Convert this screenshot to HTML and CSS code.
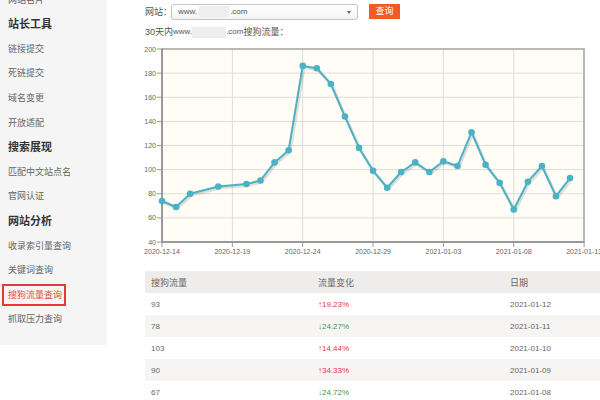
FILE: index.html
```html
<!DOCTYPE html>
<html lang="zh-CN">
<head>
<meta charset="utf-8">
<title>搜狗流量查询</title>
<link rel="stylesheet" href="styles.css">
</head>
<body>
<div class="page">
  <aside class="sidebar">
    <ul class="menu">
      <li class="item">网站名片</li>
      <li class="group">站长工具</li>
      <li class="item">链接提交</li>
      <li class="item">死链提交</li>
      <li class="item">域名变更</li>
      <li class="item">开放适配</li>
      <li class="group">搜索展现</li>
      <li class="item">匹配中文站点名</li>
      <li class="item">官网认证</li>
      <li class="group">网站分析</li>
      <li class="item">收录索引量查询</li>
      <li class="item">关键词查询</li>
      <li class="item"><span class="active">搜狗流量查询</span></li>
      <li class="item">抓取压力查询</li>
    </ul>
  </aside>
  <main class="main">
    <div class="query">
      <span class="label">网站：</span>
      <div class="select"><span class="en">www.</span><span class="mask"></span><span class="en">.com</span><span class="caret"></span></div>
      <button class="btn">查询</button>
    </div>
    <div class="title">30天内<span class="en">www.</span><span class="mask mask-title"></span><span class="en">.com</span>搜狗流量：</div>
    <svg class="chart" width="493" height="225" viewBox="107 41 493 225" xmlns="http://www.w3.org/2000/svg">
      <rect x="162" y="49" width="422" height="193" fill="#fffdf6"/>
      <g class="grid">
        <line x1="162" y1="73.1" x2="584" y2="73.1"/>
        <line x1="162" y1="97.25" x2="584" y2="97.25"/>
        <line x1="162" y1="121.4" x2="584" y2="121.4"/>
        <line x1="162" y1="145.5" x2="584" y2="145.5"/>
        <line x1="162" y1="169.6" x2="584" y2="169.6"/>
        <line x1="162" y1="193.75" x2="584" y2="193.75"/>
        <line x1="162" y1="217.9" x2="584" y2="217.9"/>
        <line x1="232.35" y1="49" x2="232.35" y2="242"/>
        <line x1="302.7" y1="49" x2="302.7" y2="242"/>
        <line x1="373.05" y1="49" x2="373.05" y2="242"/>
        <line x1="443.4" y1="49" x2="443.4" y2="242"/>
        <line x1="513.75" y1="49" x2="513.75" y2="242"/>
      </g>
      <rect class="frame" x="162" y="49" width="422" height="193"/>
      <g class="axis">
        <line x1="162" y1="48.5" x2="162" y2="242.5"/>
        <line x1="161.5" y1="242" x2="584.5" y2="242"/>
      </g>
      <g class="ticks">
        <line x1="157" y1="49" x2="161" y2="49"/>
        <line x1="157" y1="73.1" x2="161" y2="73.1"/>
        <line x1="157" y1="97.25" x2="161" y2="97.25"/>
        <line x1="157" y1="121.4" x2="161" y2="121.4"/>
        <line x1="157" y1="145.5" x2="161" y2="145.5"/>
        <line x1="157" y1="169.6" x2="161" y2="169.6"/>
        <line x1="157" y1="193.75" x2="161" y2="193.75"/>
        <line x1="157" y1="217.9" x2="161" y2="217.9"/>
        <line x1="157" y1="242" x2="161" y2="242"/>
        <line x1="162" y1="243" x2="162" y2="247"/>
        <line x1="232.35" y1="243" x2="232.35" y2="247"/>
        <line x1="302.7" y1="243" x2="302.7" y2="247"/>
        <line x1="373.05" y1="243" x2="373.05" y2="247"/>
        <line x1="443.4" y1="243" x2="443.4" y2="247"/>
        <line x1="513.75" y1="243" x2="513.75" y2="247"/>
        <line x1="584.1" y1="243" x2="584.1" y2="247"/>
      </g>
      <g class="ylab">
        <text x="156" y="51.5">200</text>
        <text x="156" y="75.6">180</text>
        <text x="156" y="99.75">160</text>
        <text x="156" y="123.9">140</text>
        <text x="156" y="148">120</text>
        <text x="156" y="172.1">100</text>
        <text x="156" y="196.25">80</text>
        <text x="156" y="220.4">60</text>
        <text x="156" y="244.5">40</text>
      </g>
      <g class="xlab">
        <text x="162" y="254">2020-12-14</text>
        <text x="232.35" y="254">2020-12-19</text>
        <text x="302.7" y="254">2020-12-24</text>
        <text x="373.05" y="254">2020-12-29</text>
        <text x="443.4" y="254">2021-01-03</text>
        <text x="513.75" y="254">2021-01-08</text>
        <text x="584.1" y="254">2021-01-13</text>
      </g>
      <g class="shadow" transform="translate(1.3 1.5)">
        <polyline points="162,200.99 176.07,207.02 190.14,193.75 218.28,186.51 246.42,184.1 260.49,180.48 274.56,162.39 288.63,150.32 302.7,65.89 316.77,68.3 330.84,83.98 344.91,116.55 358.98,147.91 373.05,170.83 387.12,187.72 401.19,172.04 415.26,162.39 429.33,172.04 443.4,161.18 457.47,166.01 471.54,132.23 485.61,164.8 499.68,182.89 513.75,209.43 527.82,181.69 541.89,166.01 555.96,196.16 570.03,178.07"/>
      </g>
      <polyline class="series" points="162,200.99 176.07,207.02 190.14,193.75 218.28,186.51 246.42,184.1 260.49,180.48 274.56,162.39 288.63,150.32 302.7,65.89 316.77,68.3 330.84,83.98 344.91,116.55 358.98,147.91 373.05,170.83 387.12,187.72 401.19,172.04 415.26,162.39 429.33,172.04 443.4,161.18 457.47,166.01 471.54,132.23 485.61,164.8 499.68,182.89 513.75,209.43 527.82,181.69 541.89,166.01 555.96,196.16 570.03,178.07"/>
      <g class="dots">
        <circle cx="162" cy="200.99" r="3.3"/>
        <circle cx="176.07" cy="207.02" r="3.3"/>
        <circle cx="190.14" cy="193.75" r="3.3"/>
        <circle cx="218.28" cy="186.51" r="3.3"/>
        <circle cx="246.42" cy="184.1" r="3.3"/>
        <circle cx="260.49" cy="180.48" r="3.3"/>
        <circle cx="274.56" cy="162.39" r="3.3"/>
        <circle cx="288.63" cy="150.32" r="3.3"/>
        <circle cx="302.7" cy="65.89" r="3.3"/>
        <circle cx="316.77" cy="68.3" r="3.3"/>
        <circle cx="330.84" cy="83.98" r="3.3"/>
        <circle cx="344.91" cy="116.55" r="3.3"/>
        <circle cx="358.98" cy="147.91" r="3.3"/>
        <circle cx="373.05" cy="170.83" r="3.3"/>
        <circle cx="387.12" cy="187.72" r="3.3"/>
        <circle cx="401.19" cy="172.04" r="3.3"/>
        <circle cx="415.26" cy="162.39" r="3.3"/>
        <circle cx="429.33" cy="172.04" r="3.3"/>
        <circle cx="443.4" cy="161.18" r="3.3"/>
        <circle cx="457.47" cy="166.01" r="3.3"/>
        <circle cx="471.54" cy="132.23" r="3.3"/>
        <circle cx="485.61" cy="164.8" r="3.3"/>
        <circle cx="499.68" cy="182.89" r="3.3"/>
        <circle cx="513.75" cy="209.43" r="3.3"/>
        <circle cx="527.82" cy="181.69" r="3.3"/>
        <circle cx="541.89" cy="166.01" r="3.3"/>
        <circle cx="555.96" cy="196.16" r="3.3"/>
        <circle cx="570.03" cy="178.07" r="3.3"/>
      </g>
    </svg>
    <table class="data">
      <colgroup><col class="c1"><col class="c2"><col class="c3"></colgroup>
      <thead>
        <tr><th>搜狗流量</th><th>流量变化</th><th>日期</th></tr>
      </thead>
      <tbody>
        <tr><td>93</td><td class="up">↑19.23%</td><td>2021-01-12</td></tr>
        <tr><td>78</td><td class="down">↓24.27%</td><td>2021-01-11</td></tr>
        <tr><td>103</td><td class="up">↑14.44%</td><td>2021-01-10</td></tr>
        <tr><td>90</td><td class="up">↑34.33%</td><td>2021-01-09</td></tr>
        <tr><td>67</td><td class="down">↓24.72%</td><td>2021-01-08</td></tr>
      </tbody>
    </table>
  </main>
</div>
</body>
</html>
```
FILE: styles.css
```css
html, body {
  margin: 0;
  padding: 0;
  width: 600px;
  height: 400px;
  overflow: hidden;
  background: #fff;
  font-family: "Liberation Sans", "Noto Sans CJK SC", sans-serif;
  color: #666;
}

.page {
  display: flex;
  align-items: flex-start;
}

/* ---------- sidebar ---------- */
.sidebar {
  width: 107px;
  flex: none;
  background: #f5f5f5;
  padding-bottom: 13px;
}

.menu {
  list-style: none;
  margin: -12.3px 0 0 0;
  padding: 0;
}

.menu li {
  height: 24.6px;
  line-height: 24.6px;
  padding-left: 8px;
  white-space: nowrap;
}

.item {
  font-size: 9px;
  color: #666;
}

.group {
  font-size: 11px;
  font-weight: bold;
  color: #333;
}

.item .active {
  display: inline-block;
  margin: 1.3px 0 0 -6px;
  padding: 0 2px 0 4px;
  height: 18px;
  line-height: 18px;
  border: 2px solid #e53935;
  color: #e8502e;
  vertical-align: top;
}

/* ---------- main ---------- */
.main {
  flex: 1;
  min-width: 0;
  font-size: 9px;
}

.en {
  font-size: 8px;
}

.query {
  display: flex;
  align-items: center;
  height: 15px;
  padding: 4px 0 4px 38px;
}

.label {
  width: 27px;
  color: #555;
}

.select {
  position: relative;
  display: flex;
  align-items: center;
  box-sizing: border-box;
  width: 187px;
  height: 16px;
  margin-left: -1px;
  padding-left: 6px;
  border: 1px solid #c4c4c4;
  border-radius: 3px;
  background: linear-gradient(#ffffff, #f4f4f4);
  color: #555;
}

.mask {
  display: inline-block;
  width: 30px;
  height: 11px;
  background: #eeeeee;
  margin: 0 1px 0 2px;
}

.caret {
  position: absolute;
  right: 6px;
  top: 6px;
  width: 0;
  height: 0;
  border-left: 2.5px solid transparent;
  border-right: 2.5px solid transparent;
  border-top: 3px solid #666;
}

.btn {
  margin-left: 11px;
  width: 31px;
  height: 15px;
  padding: 0;
  border: none;
  background: #f25a29;
  color: #fff;
  font-family: inherit;
  font-size: 9px;
  line-height: 15px;
}

.title {
  height: 18px;
  line-height: 18px;
  padding-left: 38px;
  color: #555;
  display: flex;
  align-items: center;
}

.mask-title {
  width: 34px;
  height: 11px;
  margin: 0;
}

/* ---------- chart ---------- */
.chart {
  display: block;
  overflow: hidden;
}

.grid line {
  stroke: #dcdcdc;
  stroke-width: 1;
}

.frame {
  fill: none;
  stroke: #a8a8a8;
  stroke-width: 1.6;
}

.axis line {
  stroke: #999;
  stroke-width: 2;
}

.ticks line {
  stroke: #999;
  stroke-width: 1;
}

.ylab text,
.xlab text {
  font-family: "Liberation Sans", sans-serif;
  font-size: 7px;
  fill: #666;
}

.ylab text {
  text-anchor: end;
}

.xlab text {
  text-anchor: middle;
}

.shadow polyline {
  fill: none;
  stroke: rgba(0, 0, 0, 0.12);
  stroke-width: 3;
  stroke-linejoin: round;
}

.series {
  fill: none;
  stroke: #4bb2c5;
  stroke-width: 2;
  stroke-linejoin: round;
}

.dots circle {
  fill: #4bb2c5;
}

/* ---------- table ---------- */
.data {
  margin: 5px 0 0 38px;
  width: 455px;
  border-collapse: collapse;
  table-layout: fixed;
}

.c1 { width: 167px; }
.c2 { width: 192px; }
.c3 { width: 96px; }

.data th,
.data td {
  height: 22px;
  padding: 0 0 0 6px;
  text-align: left;
  vertical-align: middle;
  white-space: nowrap;
}

.data th {
  font-weight: normal;
  font-size: 9px;
  color: #666;
  background: #efedeb;
}

.data td {
  font-size: 8px;
  color: #666;
}

.data tbody tr:nth-child(even) td {
  background: #f6f5f4;
}

.data td.up {
  color: #e4393c;
}

.data td.down {
  color: #3a9a3a;
}
```
